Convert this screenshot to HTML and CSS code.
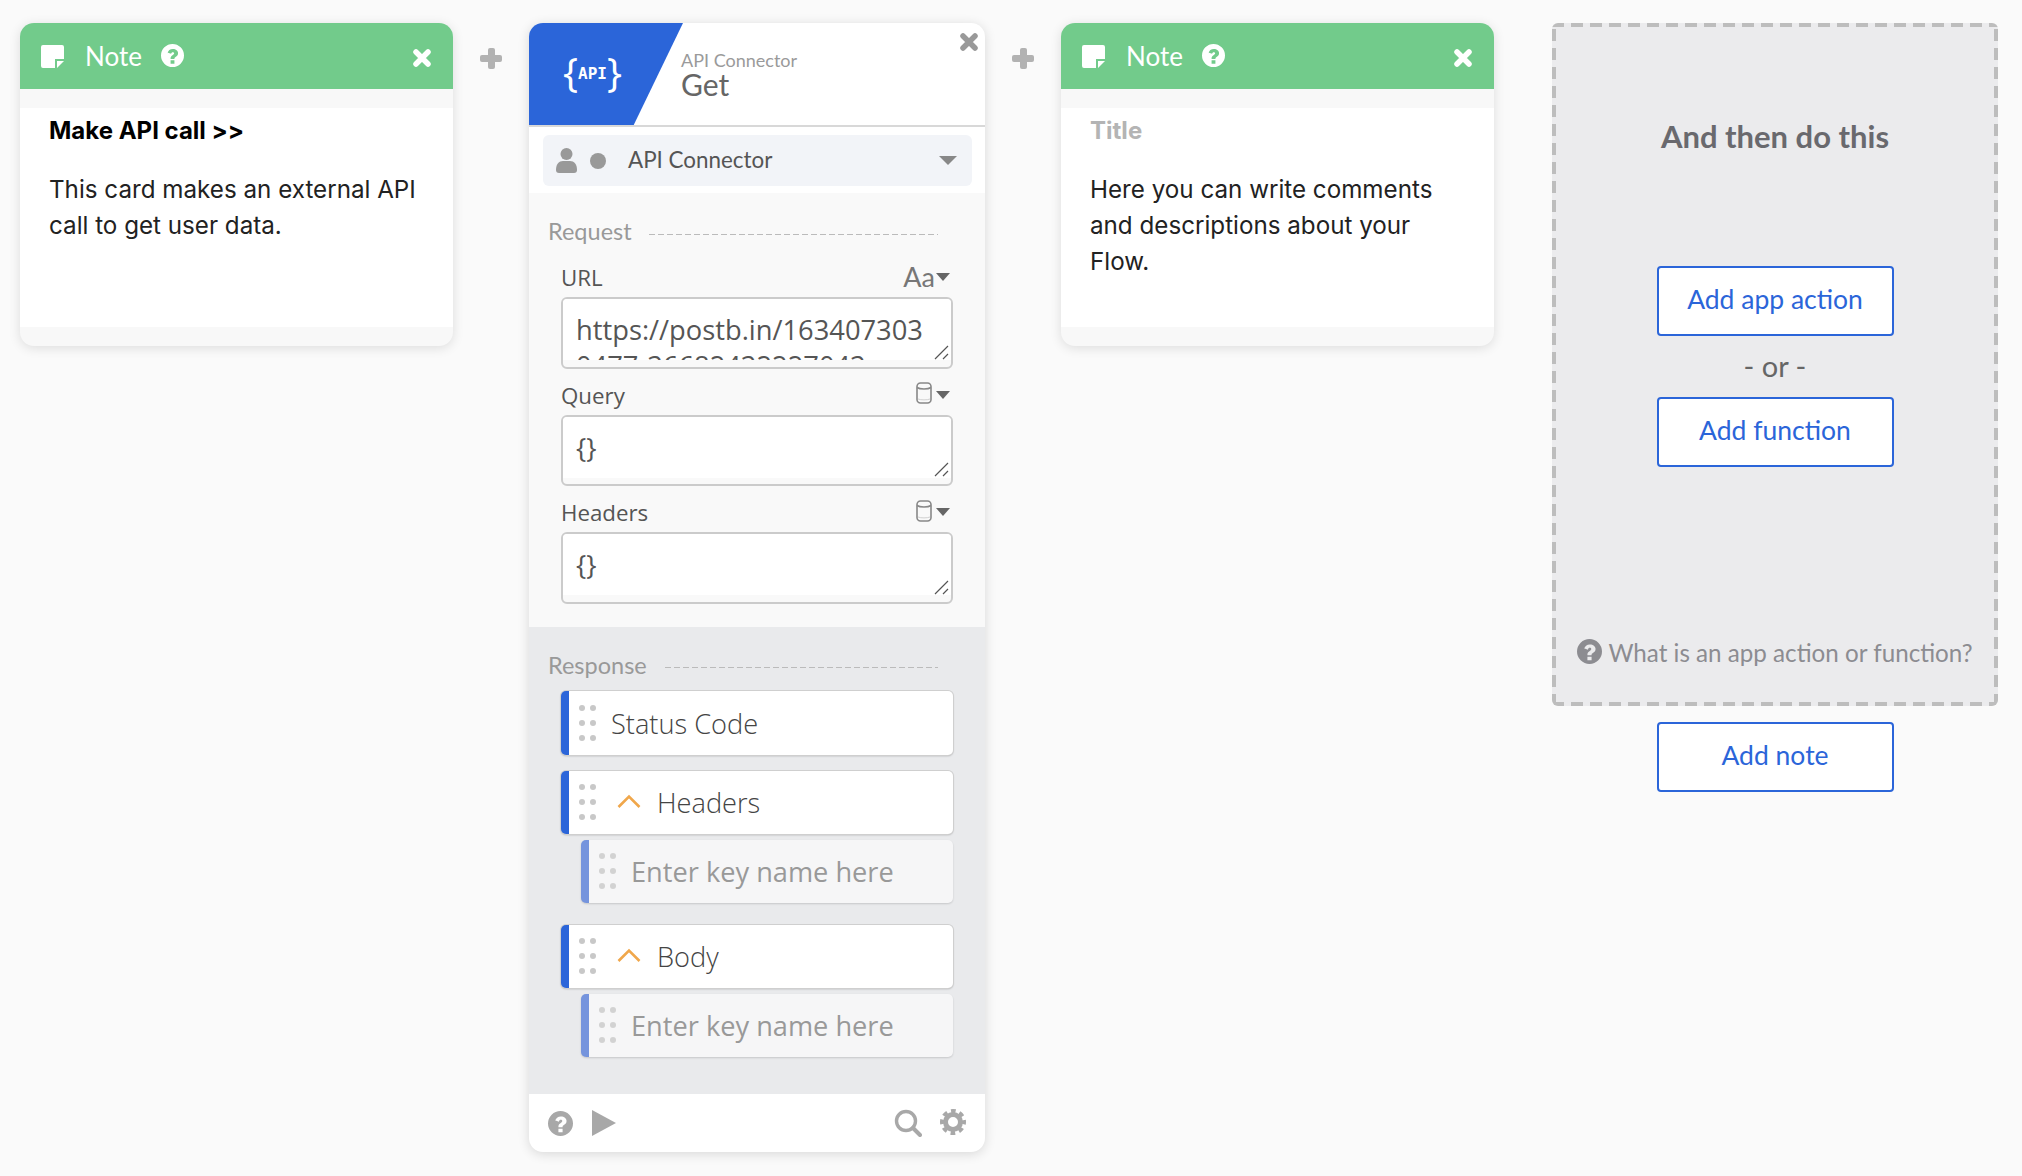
FILE: index.html
```html
<!DOCTYPE html>
<html lang="en">
<head>
    <meta charset="UTF-8">
    <title>Flow editor</title>
    <link rel="stylesheet" href="styles.css">
</head>
<body>
    <svg class="defs" width="0" height="0">
        <symbol id="i-note" viewBox="0 0 23 23"><path d="M2 0h19a2 2 0 0 1 2 2v12h-9v9H2a2 2 0 0 1-2-2V2a2 2 0 0 1 2-2z"/><path d="M16 16h7l-7 7z"/></symbol>
        <symbol id="i-help" viewBox="0 0 24 24"><path fill-rule="evenodd" d="M12 0a12 12 0 1 1 0 24a12 12 0 0 1 0-24zM10 17v3.500h4V17zM7.300 9.200l3.200 1c.3-1.100.8-1.700 1.700-1.700s1.500.5 1.500 1.200c0 .8-.6 1.200-1.400 1.700c-1.500.9-2.300 1.800-2.300 3.600v.6h4v-.4c0-.8.400-1.200 1.200-1.700c1.500-.9 2.600-1.900 2.600-3.900c0-2.700-2.300-4.400-5.400-4.400c-2.900 0-5 1.500-5.600 4.600z"/></symbol>
        <symbol id="i-close" viewBox="0 0 18 18"><path d="M3 3l12 12M15 3L3 15" stroke="currentColor" stroke-width="5.500" stroke-linecap="round" fill="none"/></symbol>
        <symbol id="i-db" viewBox="0 0 16 22"><rect x="1" y="1" width="14" height="20" rx="3.500" fill="none" stroke="currentColor" stroke-width="1.600"/><path d="M1 5.500c3 2 11 2 14 0" fill="none" stroke="currentColor" stroke-width="1.600"/><path d="M2 17c3 1.200 9 1.200 12 0" fill="none" stroke="#d0d0d0" stroke-width="1"/></symbol>
        <symbol id="i-grip" viewBox="0 0 17 37"><circle cx="3" cy="3" r="3"/><circle cx="14" cy="3" r="3"/><circle cx="3" cy="18" r="3"/><circle cx="14" cy="18" r="3"/><circle cx="3" cy="33" r="3"/><circle cx="14" cy="33" r="3"/></symbol>
        <symbol id="i-up" viewBox="0 0 24 15"><path d="M1.500 13L12 2.500L22.500 13" fill="none" stroke="currentColor" stroke-width="2.600"/></symbol>
        <symbol id="i-resize" viewBox="0 0 15 15"><path d="M1 14L14 1M9 14l5-5" stroke="#555" stroke-width="1.200" fill="none"/></symbol>
    </svg>

    <div class="flow">
        <div class="note">
            <div class="note-head">
                <svg class="note-icon"><use href="#i-note"/></svg>
                <span class="note-label">Note</span>
                <svg class="note-help"><use href="#i-help"/></svg>
                <svg class="note-close"><use href="#i-close"/></svg>
            </div>
            <div class="note-body">
                <div class="note-title">Make API call &gt;&gt;</div>
                <p class="note-text">This card makes an external API call to get user data.</p>
            </div>
        </div>

        <div class="plus"></div>

        <div class="card">
            <div class="card-head">
                <div class="logo"><span class="brace">{</span><span class="logo-api">API</span><span class="brace">}</span></div>
                <div class="card-titles">
                    <div class="card-sub">API Connector</div>
                    <div class="card-title">Get</div>
                </div>
                <svg class="card-close"><use href="#i-close"/></svg>
            </div>

            <div class="account">
                <div class="account-pill">
                    <svg class="person" viewBox="0 0 21 25"><circle cx="10.500" cy="6" r="6"/><path d="M0 22c0-6 3-9 7-9h7c4 0 7 3 7 9c0 2-1 3-3 3H3c-2 0-3-1-3-3z"/></svg>
                    <span class="account-dot"></span>
                    <span class="account-name">API Connector</span>
                    <span class="caret caret-big"></span>
                </div>
            </div>

            <div class="request">
                <div class="section-title"><span>Request</span><i class="dashes"></i></div>

                <div class="field-label">
                    <span>URL</span>
                    <span class="field-tool"><span class="aa">Aa</span><span class="caret"></span></span>
                </div>
                <div class="textbox">
                    <div class="textbox-inner">https://postb.in/163407303<br>0477-36682432227043</div>
                    <svg class="resizer"><use href="#i-resize"/></svg>
                </div>

                <div class="field-label">
                    <span>Query</span>
                    <span class="field-tool"><svg class="db"><use href="#i-db"/></svg><span class="caret"></span></span>
                </div>
                <div class="textbox">
                    <div class="textbox-inner">{}</div>
                    <svg class="resizer"><use href="#i-resize"/></svg>
                </div>

                <div class="field-label">
                    <span>Headers</span>
                    <span class="field-tool"><svg class="db"><use href="#i-db"/></svg><span class="caret"></span></span>
                </div>
                <div class="textbox">
                    <div class="textbox-inner">{}</div>
                    <svg class="resizer"><use href="#i-resize"/></svg>
                </div>
            </div>

            <div class="response">
                <div class="section-title"><span>Response</span><i class="dashes"></i></div>

                <div class="row row-first">
                    <svg class="grip"><use href="#i-grip"/></svg>
                    <span class="row-name">Status Code</span>
                </div>

                <div class="row">
                    <svg class="grip"><use href="#i-grip"/></svg>
                    <svg class="chevron"><use href="#i-up"/></svg>
                    <span class="row-name">Headers</span>
                </div>
                <div class="row row-sub">
                    <svg class="grip"><use href="#i-grip"/></svg>
                    <span class="row-name">Enter key name here</span>
                </div>

                <div class="row row-next">
                    <svg class="grip"><use href="#i-grip"/></svg>
                    <svg class="chevron"><use href="#i-up"/></svg>
                    <span class="row-name">Body</span>
                </div>
                <div class="row row-sub">
                    <svg class="grip"><use href="#i-grip"/></svg>
                    <span class="row-name">Enter key name here</span>
                </div>
            </div>

            <div class="card-foot">
                <svg class="foot-help"><use href="#i-help"/></svg>
                <svg class="foot-play" viewBox="0 0 24 26"><path d="M0 0l24 13L0 26z"/></svg>
                <svg class="foot-search" viewBox="0 0 28 28"><circle cx="12" cy="12" r="9.500" fill="none" stroke="currentColor" stroke-width="3.400"/><path d="M19 19l7 7" stroke="currentColor" stroke-width="4" stroke-linecap="round"/></svg>
                <svg class="foot-gear" viewBox="0 0 26 26">
                    <circle cx="13" cy="13" r="7.500" fill="none" stroke="currentColor" stroke-width="5"/>
                    <circle cx="13" cy="13" r="11" fill="none" stroke="currentColor" stroke-width="4" stroke-dasharray="4.640 3.999" stroke-dashoffset="2.320"/>
                </svg>
            </div>
        </div>

        <div class="plus"></div>

        <div class="note">
            <div class="note-head">
                <svg class="note-icon"><use href="#i-note"/></svg>
                <span class="note-label">Note</span>
                <svg class="note-help"><use href="#i-help"/></svg>
                <svg class="note-close"><use href="#i-close"/></svg>
            </div>
            <div class="note-body">
                <div class="note-title note-title-empty">Title</div>
                <p class="note-text">Here you can write comments and descriptions about your Flow.</p>
            </div>
        </div>

        <div class="next">
            <div class="next-panel">
                <div class="next-title">And then do this</div>
                <button class="add-btn add-first">Add app action</button>
                <div class="next-or">- or -</div>
                <button class="add-btn">Add function</button>
                <div class="next-help">
                    <svg class="next-help-icon"><use href="#i-help"/></svg>
                    <span>What is an app action or function?</span>
                </div>
            </div>
            <button class="add-btn add-note">Add note</button>
        </div>
    </div>
</body>
</html>
```

FILE: styles.css
```css
body{
    margin: 0;
    height: 1176px;
    overflow: hidden;
    background-color: #fafafa;
    font-family: "Lato", "Liberation Sans", sans-serif;
}
.defs{
    position: absolute;
}
.flow{
    display: flex;
    align-items: flex-start;
    padding: 23px 0 0 20px;
}

/* note cards */
.note{
    width: 433px;
    height: 323px;
    flex: none;
    border-radius: 14px;
    overflow: hidden;
    background-color: #f8f8f8;
    box-shadow: 0 2px 12px rgba(0,0,0,0.12);
}
.note-head{
    height: 66px;
    display: flex;
    align-items: center;
    padding: 0 22px 0 21px;
    background-color: #72cb8b;
    color: #fff;
}
.note-icon{
    width: 23px;
    height: 23px;
    fill: #fff;
    margin-top: 1px;
}
.note-label{
    margin-left: 21px;
    font-size: 26px;
}
.note-help{
    width: 23px;
    height: 23px;
    fill: #fff;
    margin: -2px 0 0 19px;
}
.note-close{
    width: 18px;
    height: 18px;
    margin: 3px 0 0 auto;
    color: #fff;
}
.note-body{
    height: 219px;
    margin-top: 19px;
    padding: 0 28px 0 29px;
    background-color: #fff;
    font-family: "Inter", "Liberation Sans", sans-serif;
}
.note-title{
    height: 44px;
    line-height: 46px;
    font-size: 24px;
    font-weight: bold;
    color: #000;
}
.note-title-empty{
    color: #b4b4b4;
}
.note-text{
    margin: 20px 0 0 0;
    font-size: 24.200px;
    line-height: 36px;
    color: #222;
}

.plus{
    width: 76px;
    height: 46px;
    flex: none;
    position: relative;
}
.plus::before,
.plus::after{
    content: "";
    position: absolute;
    background-color: #b2b2b2;
    border-radius: 2px;
}
.plus::before{
    left: 27px;
    top: 32px;
    width: 22px;
    height: 7px;
}
.plus::after{
    left: 35px;
    top: 25px;
    width: 7px;
    height: 21px;
}

/* api card */
.card{
    width: 456px;
    height: 1129px;
    flex: none;
    border-radius: 14px;
    overflow: hidden;
    background-color: #fff;
    box-shadow: 0 2px 12px rgba(0,0,0,0.14);
}
.card-head{
    height: 102px;
    display: flex;
    border-bottom: 2px solid #d8d8d8;
}
.logo{
    width: 154px;
    flex: none;
    display: flex;
    align-items: center;
    padding: 0 0 0 34px;
    box-sizing: border-box;
    background-color: #2b65d9;
    clip-path: polygon(0 0, 100% 0, 68% 100%, 0 100%);
    color: #fff;
}
.brace{
    font-family: "Open Sans", sans-serif;
    font-size: 40px;
    line-height: 50px;
    margin-top: -4px;
}
.logo-api{
    font-family: "DejaVu Sans Mono", monospace;
    font-size: 16px;
    font-weight: bold;
    margin-top: -1px;
}
.card-titles{
    margin-left: -2px;
    padding-top: 27px;
}
.card-sub{
    font-size: 18px;
    line-height: 20px;
    color: #9a9a9a;
}
.card-title{
    font-size: 30px;
    line-height: 28px;
    color: #666;
}
.card-close{
    width: 18px;
    height: 18px;
    margin: 10px 7px 0 auto;
    color: #999;
}
.account{
    height: 66px;
    box-sizing: border-box;
    padding: 8px 13px 0 14px;
}
.account-pill{
    height: 51px;
    display: flex;
    align-items: center;
    padding: 0 15px 0 13px;
    border-radius: 6px;
    background-color: #f2f4f8;
}
.person{
    width: 21px;
    height: 25px;
    fill: #999;
}
.account-dot{
    width: 16px;
    height: 16px;
    margin-left: 13px;
    border-radius: 50%;
    background-color: #999;
}
.account-name{
    margin: -2px 0 0 22px;
    font-size: 22.400px;
    color: #555;
}
.caret{
    display: inline-block;
    width: 0;
    height: 0;
    border-left: 7px solid transparent;
    border-right: 7px solid transparent;
    border-top: 8px solid #666;
}
.caret-big{
    margin-left: auto;
    border-left-width: 9px;
    border-right-width: 9px;
    border-top: 9px solid #888;
}

.request{
    height: 434px;
    box-sizing: border-box;
    padding: 24px 32px 0 32px;
    background-color: #f9f9f9;
}
.section-title{
    display: flex;
    align-items: center;
    height: 28px;
    margin: 0 15px 6px -13px;
    font-size: 23.500px;
    line-height: 28px;
    color: #999;
}
.dashes{
    flex: 1;
    height: 1px;
    margin: 6px 0 0 17px;
    background-image: repeating-linear-gradient(90deg, #bbb 0 6px, transparent 6px 9px);
}
.field-label{
    height: 34px;
    padding-top: 12px;
    display: flex;
    justify-content: space-between;
    font-family: "Open Sans", sans-serif;
    font-size: 22.300px;
    line-height: 30px;
    color: #555;
}
.field-tool{
    display: flex;
    align-items: center;
    gap: 4px;
    margin: -6px 3px 0 0;
}
.aa{
    font-family: "Lato", sans-serif;
    font-size: 27px;
    color: #777;
    gap: 0;
    margin-right: -3px;
}
.db{
    width: 16px;
    height: 22px;
    margin-top: -3px;
    color: #888;
}
.textbox{
    height: 71.500px;
    box-sizing: border-box;
    position: relative;
    border: 2px solid #cbcbcb;
    border-radius: 6px;
    overflow: hidden;
    background-color: #f9f9f9;
}
.textbox-inner{
    height: 61px;
    overflow: hidden;
    padding: 13px 0 0 13px;
    box-sizing: border-box;
    background-color: #fff;
    font-family: "Open Sans", sans-serif;
    font-size: 27.300px;
    line-height: 36px;
    color: #555;
}
.resizer{
    position: absolute;
    right: 2px;
    bottom: 7px;
    width: 15px;
    height: 15px;
}

.response{
    height: 467px;
    box-sizing: border-box;
    padding: 24px 32px 0 32px;
    background-color: #e9eaec;
}
.response .section-title{
    margin-bottom: 0;
    margin-right: 15px;
}
.response .dashes{
    margin-top: 4px;
    margin-left: 18px;
}
.row{
    height: 63px;
    margin-top: 16px;
    display: flex;
    align-items: center;
    box-sizing: border-box;
    border-left: 8px solid #2b65d9;
    border-radius: 5px;
    background-color: #fff;
    box-shadow: 0 0 0 1px #cfcfcf, 0 1px 2px rgba(0,0,0,0.3);
    font-family: "Open Sans", sans-serif;
    font-size: 27.200px;
    font-weight: 300;
    color: #444;
}
.row-first{
    height: 64px;
    margin-top: 12px;
}
.row-next{
    margin-top: 22px;
}
.row-sub{
    margin: 6px 0 0 20px;
    border-left-color: #7594dd;
    background-color: #f6f6f7;
    box-shadow: 0 1px 2px rgba(0,0,0,0.15);
    color: #999;
    font-weight: 400;
}
.grip{
    width: 17px;
    height: 37px;
    margin-left: 10px;
    flex: none;
    fill: #c8c8c8;
}
.row-sub .grip{
    fill: #d2d2d2;
}
.chevron{
    width: 24px;
    height: 15px;
    margin: -2px 0 0 21px;
    color: #f0a74b;
}
.row-name{
    margin-left: 15px;
}
.chevron + .row-name{
    margin-left: 16px;
}
.card-foot{
    height: 58px;
    display: flex;
    align-items: center;
    padding: 0 19px 0 19px;
    color: #a8a8a8;
}
.foot-help{
    width: 25px;
    height: 25px;
    fill: #a8a8a8;
}
.foot-play{
    width: 24px;
    height: 26px;
    margin-left: 19px;
    fill: #a8a8a8;
}
.foot-search{
    width: 28px;
    height: 28px;
    margin-left: auto;
}
.foot-gear{
    width: 26px;
    height: 26px;
    margin: -3px 0 0 18px;
}

/* right column */
.next{
    width: 446px;
    margin-left: 58px;
    flex: none;
    display: flex;
    flex-direction: column;
    align-items: center;
}
.next-panel{
    width: 100%;
    height: 683px;
    box-sizing: border-box;
    display: flex;
    flex-direction: column;
    align-items: center;
    padding: 93px 0 38px 0;
    border-radius: 6px;
    background-color: #ebebed;
    background-image:
        repeating-linear-gradient(90deg, #bdbdbd 0 12px, transparent 12px 19px),
        repeating-linear-gradient(90deg, #bdbdbd 0 12px, transparent 12px 19px),
        repeating-linear-gradient(0deg, #bdbdbd 0 12px, transparent 12px 19px),
        repeating-linear-gradient(0deg, #bdbdbd 0 12px, transparent 12px 19px);
    background-size: 100% 4px, 100% 4px, 4px 100%, 4px 100%;
    background-position: top, bottom, left, right;
    background-repeat: no-repeat;
}
.next-title{
    height: 40px;
    font-size: 31px;
    line-height: 40px;
    font-weight: bold;
    color: #69696e;
}
.add-btn{
    width: 237px;
    height: 70px;
    flex: none;
    box-sizing: border-box;
    padding: 0 0 5px 0;
    border: 2px solid #2b65d9;
    border-radius: 4px;
    background-color: #fff;
    font-family: "Lato", sans-serif;
    font-size: 26.500px;
    color: #2b65d9;
}
.add-first{
    margin-top: 110px;
}
.next-or{
    height: 61px;
    font-size: 29px;
    line-height: 59px;
    color: #666;
}
.next-help{
    margin-top: auto;
    display: flex;
    align-items: center;
    gap: 6px;
    font-size: 24.200px;
    line-height: 30px;
    color: #8c8c91;
}
.next-help-icon{
    width: 25px;
    height: 25px;
    fill: #8c8c91;
    margin-top: -3px;
}
.add-note{
    margin-top: 16px;
}
```
